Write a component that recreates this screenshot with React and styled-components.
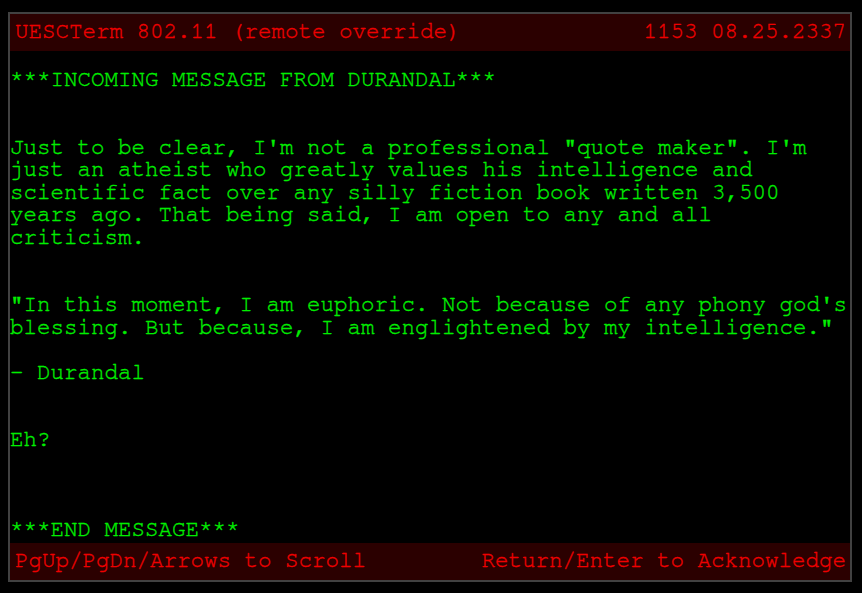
import styled, { createGlobalStyle } from 'styled-components';

const GlobalStyle = createGlobalStyle`
  html, body {
    margin: 0;
    padding: 0;
    background: #000;
  }
`;

export default function App() {
  return (
    <>
      <GlobalStyle />
      <Terminal>
        <Bar>
          <span>UESCTerm 802.11 (remote override)</span>
          <span>1153 08.25.2337</span>
        </Bar>
        <Screen>
          <Line gap={2}>***INCOMING MESSAGE FROM DURANDAL***</Line>
          <Line gap={2}>
            Just to be clear, I'm not a professional "quote maker". I'm just an atheist who
            greatly values his intelligence and scientific fact over any silly fiction book
            written 3,500 years ago. That being said, I am open to any and all criticism.
          </Line>
          <Line gap={1}>
            "In this moment, I am euphoric. Not because of any phony god's blessing. But
            because, I am englightened by my intelligence."
          </Line>
          <Line gap={2}>- Durandal</Line>
          <Line gap={3}>Eh?</Line>
          <Line>***END MESSAGE***</Line>
        </Screen>
        <Bar>
          <span>PgUp/PgDn/Arrows to Scroll</span>
          <span>Return/Enter to Acknowledge</span>
        </Bar>
      </Terminal>
    </>
  );
}

const Terminal = styled.div`
  width: 840px;
  height: 566px;
  margin: 12px 0 0 8px;
  border: 2px solid #414141;
  background: #000;
  display: flex;
  flex-direction: column;
  font-family: 'Nimbus Mono PS', 'Nimbus Mono L', FreeMono, 'Courier New', Courier, 'Liberation Mono', monospace;
  font-size: 22.5px;
  line-height: 22.5px;
  -webkit-text-stroke: 0.35px currentColor;
`;

const Bar = styled.div`
  height: 37px;
  flex-shrink: 0;
  background: #2b0000;
  color: #f00000;
  display: flex;
  align-items: center;
  justify-content: space-between;
  padding: 0 4px 0 5px;
  white-space: pre;
`;

const Screen = styled.div`
  flex: 1;
  overflow: hidden;
  padding-top: 18px;
  color: #00f000;
  display: flex;
  flex-direction: column;
`;

const Line = styled.div`
  margin-bottom: ${(props) => (props.gap || 0) * 22.5}px;
`;
